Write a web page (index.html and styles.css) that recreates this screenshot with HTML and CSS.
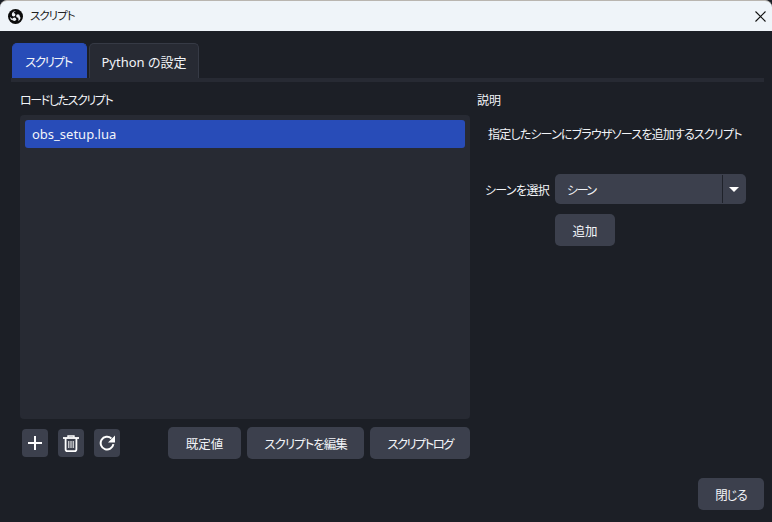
FILE: index.html
```html
<!DOCTYPE html>
<html lang="ja">
<head>
<meta charset="utf-8">
<title>スクリプト</title>
<link rel="stylesheet" href="styles.css">
</head>
<body>
<div class="window">
  <header class="titlebar">
    <svg class="logo" viewBox="0 0 16 16" width="15" height="15">
      <circle cx="8" cy="8" r="8" fill="#0c0c0c"/>
      <g fill="#f2f5f9">
        <circle cx="6" cy="6.2" r="1.9"/>
        <circle cx="10.6" cy="7.4" r="1.9"/>
        <circle cx="6.8" cy="11" r="1.9"/>
        <path d="M4.2 6.2C3.9 4 6 2 8.8 2.5 7.2 2.8 6.4 3.4 6 4.3z"/>
        <path d="M12.4 7.4C14 8.8 13.4 11.6 10.8 13 11.5 11.6 11.5 10.4 10.6 9.3z"/>
        <path d="M5.2 12C3.4 11.8 2 10.2 2.4 8.2 3 9.4 4 10.2 5 10.2z"/>
      </g>
    </svg>
    <span class="title">スクリプト</span>
    <svg class="close-x" viewBox="0 0 11 11" width="11" height="11"><path d="M.5.5l10 10M10.5.5l-10 10" stroke="#111" stroke-width="1.1" fill="none"/></svg>
  </header>
  <main class="content">
    <nav class="tabs">
      <div class="tab tab-active">スクリプト</div>
      <div class="tab">Python の設定</div>
    </nav>
    <div class="tab-line"></div>
    <section class="panes">
      <div class="left">
        <div class="section-label section-loaded">ロードしたスクリプト</div>
        <div class="list">
          <div class="list-item">obs_setup.lua</div>
        </div>
        <div class="actions">
          <div class="icons">
            <button class="icon-btn" aria-label="追加">
              <svg viewBox="0 0 16 16" width="16" height="16"><path d="M8 1v14M1 8h14" stroke="#fff" stroke-width="2" fill="none"/></svg>
            </button>
            <button class="icon-btn" aria-label="削除">
              <svg viewBox="0 0 16 17" width="16" height="17"><path d="M0 3h16" stroke="#fff" stroke-width="1.8"/><path d="M5 2.5V1h6v1.5" stroke="#fff" stroke-width="1.4" fill="none"/><path d="M2.6 3v11.2c0 1.2.7 1.9 1.8 1.9h7.2c1.1 0 1.8-.7 1.8-1.9V3" stroke="#fff" stroke-width="1.8" fill="none"/><path d="M5.8 6v7M8 6v7M10.2 6v7" stroke="#fff" stroke-width="1" fill="none"/></svg>
            </button>
            <button class="icon-btn" aria-label="再読み込み">
              <svg viewBox="0 0 16 16" width="16" height="16"><path d="M14.4 9.2A6.4 6.4 0 1 1 12.4 3.4" stroke="#fff" stroke-width="2" fill="none"/><path d="M16 .6v7H9z" fill="#fff"/></svg>
            </button>
          </div>
          <div class="text-btns">
            <button class="btn btn-default">既定値</button>
            <button class="btn btn-edit">スクリプトを編集</button>
            <button class="btn btn-log">スクリプトログ</button>
          </div>
        </div>
      </div>
      <div class="right">
        <div class="section-label">説明</div>
        <p class="desc">指定したシーンにブラウザソースを追加するスクリプト</p>
        <div class="form-row">
          <label class="form-label">シーンを選択</label>
          <div class="combo">
            <span class="combo-value">シーン</span>
            <span class="combo-arrow"></span>
          </div>
        </div>
        <button class="btn btn-add">追加</button>
      </div>
    </section>
    <footer class="footer">
      <button class="btn btn-close">閉じる</button>
    </footer>
  </main>
</div>
</body>
</html>
```
FILE: styles.css
```css
* { box-sizing: border-box; }
html, body { margin: 0; height: 100%; background: #1c1f26; }
body {
  font-family: "Noto Sans CJK JP", "Noto Sans", sans-serif;
  font-size: 12px;
  color: #f2f4f8;
  font-feature-settings: "palt";
  overflow: hidden;
}
.window { width: 772px; height: 522px; display: flex; flex-direction: column; }
.titlebar {
  height: 31px;
  flex: none;
  background: #eff4f9;
  border-top: 1px solid #b9b5b0;
  display: flex;
  align-items: center;
  padding: 0 6px 0 8px;
  color: #222;
  border-radius: 7px 7px 0 0;
}
.logo { margin-right: 7px; }
.title { flex: 1; font-size: 11.5px; letter-spacing: -1px; margin-bottom: 2px; }
.content { flex: 1; display: flex; flex-direction: column; padding: 12px 8px 12px 11px; min-height: 0; }
.tabs { display: flex; gap: 2px; height: 35px; padding-left: 1px; flex: none; }
.tab {
  width: 110px;
  background: #272a33;
  border: 1px solid #363a45;
  border-bottom: none;
  border-radius: 5px 5px 0 0;
  display: flex;
  align-items: center;
  justify-content: center;
  font-size: 13px;
  font-family: "Noto Sans", "Noto Sans CJK JP", sans-serif;
}
.tab-active { width: 75px; background: #284cb8; border-color: #284cb8; font-size: 12.5px; letter-spacing: -1.4px; padding-right: 2px; }
.tab-line { height: 4px; background: #272a33; flex: none; }
.panes { display: flex; flex: none; height: 377px; padding: 0 0 0 9px; }
.left { width: 450px; display: flex; flex-direction: column; }
.section-label { height: 33px; padding-top: 9px; line-height: 18px; font-size: 12px; }
.section-loaded { letter-spacing: -1.4px; }
.list { height: 304px; background: #272a33; border-radius: 4px; padding: 5px; flex: none; }
.list-item {
  height: 28px;
  background: #284cb8;
  border-radius: 3px;
  padding-left: 7px;
  line-height: 28px;
  font-family: "Noto Sans", sans-serif;
  font-size: 13px;
}
.actions { display: flex; justify-content: space-between; align-items: center; height: 32px; margin-top: 8px; }
.icons { display: flex; gap: 10px; padding-left: 2px; }
.icon-btn {
  width: 26px; height: 28px; padding: 0; border: none;
  background: #3c404d; border-radius: 4px;
  display: flex; align-items: center; justify-content: center;
}
.text-btns { display: flex; gap: 6px; }
.btn {
  height: 32px; padding: 0; border: none;
  background: #3c404d; color: #f2f4f8; border-radius: 5px;
  font: inherit; font-feature-settings: "palt"; font-size: 12.5px;
}
.btn-default { width: 73px; }
.btn-edit { width: 117px; letter-spacing: -1px; }
.btn-log { width: 100px; letter-spacing: -1.7px; }
.right { margin-left: 7px; flex: 1; }
.desc { margin: 0 0 0 11px; height: 36px; padding-top: 10px; line-height: 18px; font-size: 12px; white-space: nowrap; letter-spacing: -0.8px; }
.form-row { display: flex; align-items: center; margin-top: 23px; height: 30px; padding-left: 8px; }
.form-label { width: 70px; font-size: 12px; letter-spacing: -0.67px; }
.combo {
  width: 191px; height: 30px; background: #3c404d; border-radius: 5px;
  display: flex; align-items: center; position: relative;
}
.combo-value { flex: 1; padding-left: 12px; font-size: 12px; letter-spacing: -1.4px; }
.combo-arrow {
  width: 24px; height: 28px; border-left: 1px solid #1f222a; position: relative;
}
.combo-arrow::after {
  content: ""; position: absolute; left: 6px; top: 12px;
  border-left: 5px solid transparent; border-right: 5px solid transparent; border-top: 5px solid #fff;
}
.btn-add { width: 60px; margin: 10px 0 0 78px; display: block; letter-spacing: 0; }
.footer { flex: 1; display: flex; justify-content: flex-end; align-items: flex-end; }
.btn-close { width: 66px; letter-spacing: -1px; }
```
